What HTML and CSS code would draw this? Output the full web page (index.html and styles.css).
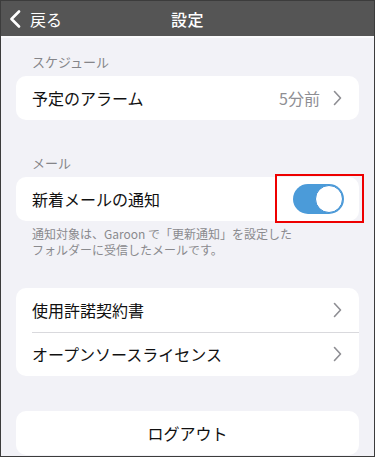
FILE: index.html
```html
<!DOCTYPE html>
<html lang="ja">
<head>
<meta charset="utf-8">
<link rel="stylesheet" href="styles.css">
</head>
<body>
<div class="frame">
  <header class="navbar">
    <div class="back">
      <svg class="back-icon" width="12" height="18" viewBox="0 0 12 18"><path d="M10 1.5 L2.5 9 L10 16.5" fill="none" stroke="#fff" stroke-width="2.6" stroke-linecap="round" stroke-linejoin="round"/></svg>
      <span>戻る</span>
    </div>
    <div class="title">設定</div>
    <div></div>
  </header>
  <main class="content">
    <div class="section-label">スケジュール</div>
    <div class="card">
      <div class="row">
        <span class="row-title">予定のアラーム</span>
        <span class="row-value">5分前</span>
        <svg class="chev" width="9" height="16" viewBox="0 0 9 16"><path d="M1.5 1.5 L7.5 8 L1.5 14.5" fill="none" stroke="#8e8e93" stroke-width="1.6" stroke-linecap="round" stroke-linejoin="round"/></svg>
      </div>
    </div>

    <div class="section-label mail-label">メール</div>
    <div class="card">
      <div class="row">
        <span class="row-title">新着メールの通知</span>
        <span class="toggle-wrap">
          <span class="toggle"><span class="knob"></span></span>
          <span class="highlight"></span>
        </span>
      </div>
    </div>
    <p class="note">通知対象は、Garoon で「更新通知」を設定した<br>フォルダーに受信したメールです。</p>

    <div class="card card-legal">
      <div class="row">
        <span class="row-title">使用許諾契約書</span>
        <svg class="chev" width="9" height="16" viewBox="0 0 9 16"><path d="M1.5 1.5 L7.5 8 L1.5 14.5" fill="none" stroke="#8e8e93" stroke-width="1.6" stroke-linecap="round" stroke-linejoin="round"/></svg>
      </div>
      <div class="row row-sep">
        <span class="row-title">オープンソースライセンス</span>
        <svg class="chev" width="9" height="16" viewBox="0 0 9 16"><path d="M1.5 1.5 L7.5 8 L1.5 14.5" fill="none" stroke="#8e8e93" stroke-width="1.6" stroke-linecap="round" stroke-linejoin="round"/></svg>
      </div>
    </div>

    <div class="card card-logout">
      <div class="row row-center">ログアウト</div>
    </div>
  </main>
</div>
</body>
</html>
```

FILE: styles.css
```css
* { box-sizing: border-box; }
html, body { margin: 0; padding: 0; }
body {
  font-family: "Noto Sans CJK JP", "Noto Sans", sans-serif;
  background: #f2f2f7;
}
.frame {
  width: 375px;
  height: 457px;
  border: 1px solid #3c3c3c;
  background: #f2f2f7;
  overflow: hidden;
}
.navbar {
  height: 37px;
  background: #555555;
  border-bottom: 2px solid #fbfbfd;
  display: grid;
  grid-template-columns: 1fr auto 1fr;
  align-items: center;
  color: #fff;
}
.back {
  display: flex;
  align-items: center;
  padding-left: 8px;
  font-size: 16px;
  gap: 9px;
}
.back-icon { display: block; }
.title {
  font-size: 16px;
  font-weight: 500;
  letter-spacing: 0.5px;
}
.content {
  padding: 0 15px;
}
.section-label {
  font-size: 13px;
  line-height: 18px;
  color: #858589;
  padding-left: 16px;
  margin-top: 15px;
  margin-bottom: 5px;
}
.mail-label { margin-top: 34px; }
.card {
  background: #fff;
  border-radius: 10px;
}
.row {
  height: 44px;
  display: flex;
  align-items: center;
  padding: 0 16px;
  font-size: 16px;
  color: #111;
}
.card:first-of-type .row { height: 43px; }
.row-title { flex: 1; }
.row-value {
  color: #8e8e93;
  margin-right: 13px;
}
.chev { display: block; margin-right: 1px; }
.row-sep { position: relative; }
.row-sep::before {
  content: "";
  position: absolute;
  left: 16px;
  right: 0;
  top: 0;
  height: 1px;
  background: #d9d9dd;
}
.toggle-wrap {
  position: relative;
  display: block;
  margin-right: -1px;
}
.toggle {
  display: flex;
  justify-content: flex-end;
  width: 51px;
  height: 30px;
  border-radius: 15px;
  background: #4b9bd9;
  padding: 1px;
}
.knob {
  width: 28px;
  height: 28px;
  border-radius: 50%;
  background: #fff;
  border: 1.5px solid #3f8fd3;
}
.highlight {
  position: absolute;
  left: -18px;
  top: -10px;
  width: 89px;
  height: 49px;
  border: 2px solid #ee0000;
}
.note {
  margin: 5px 0 0;
  padding-left: 16px;
  font-size: 12px;
  line-height: 16px;
  color: #8a8a8e;
}
.card-legal { margin-top: 30px; }
.card-logout { margin-top: 35px; }
.row-center {
  justify-content: center;
}
```
